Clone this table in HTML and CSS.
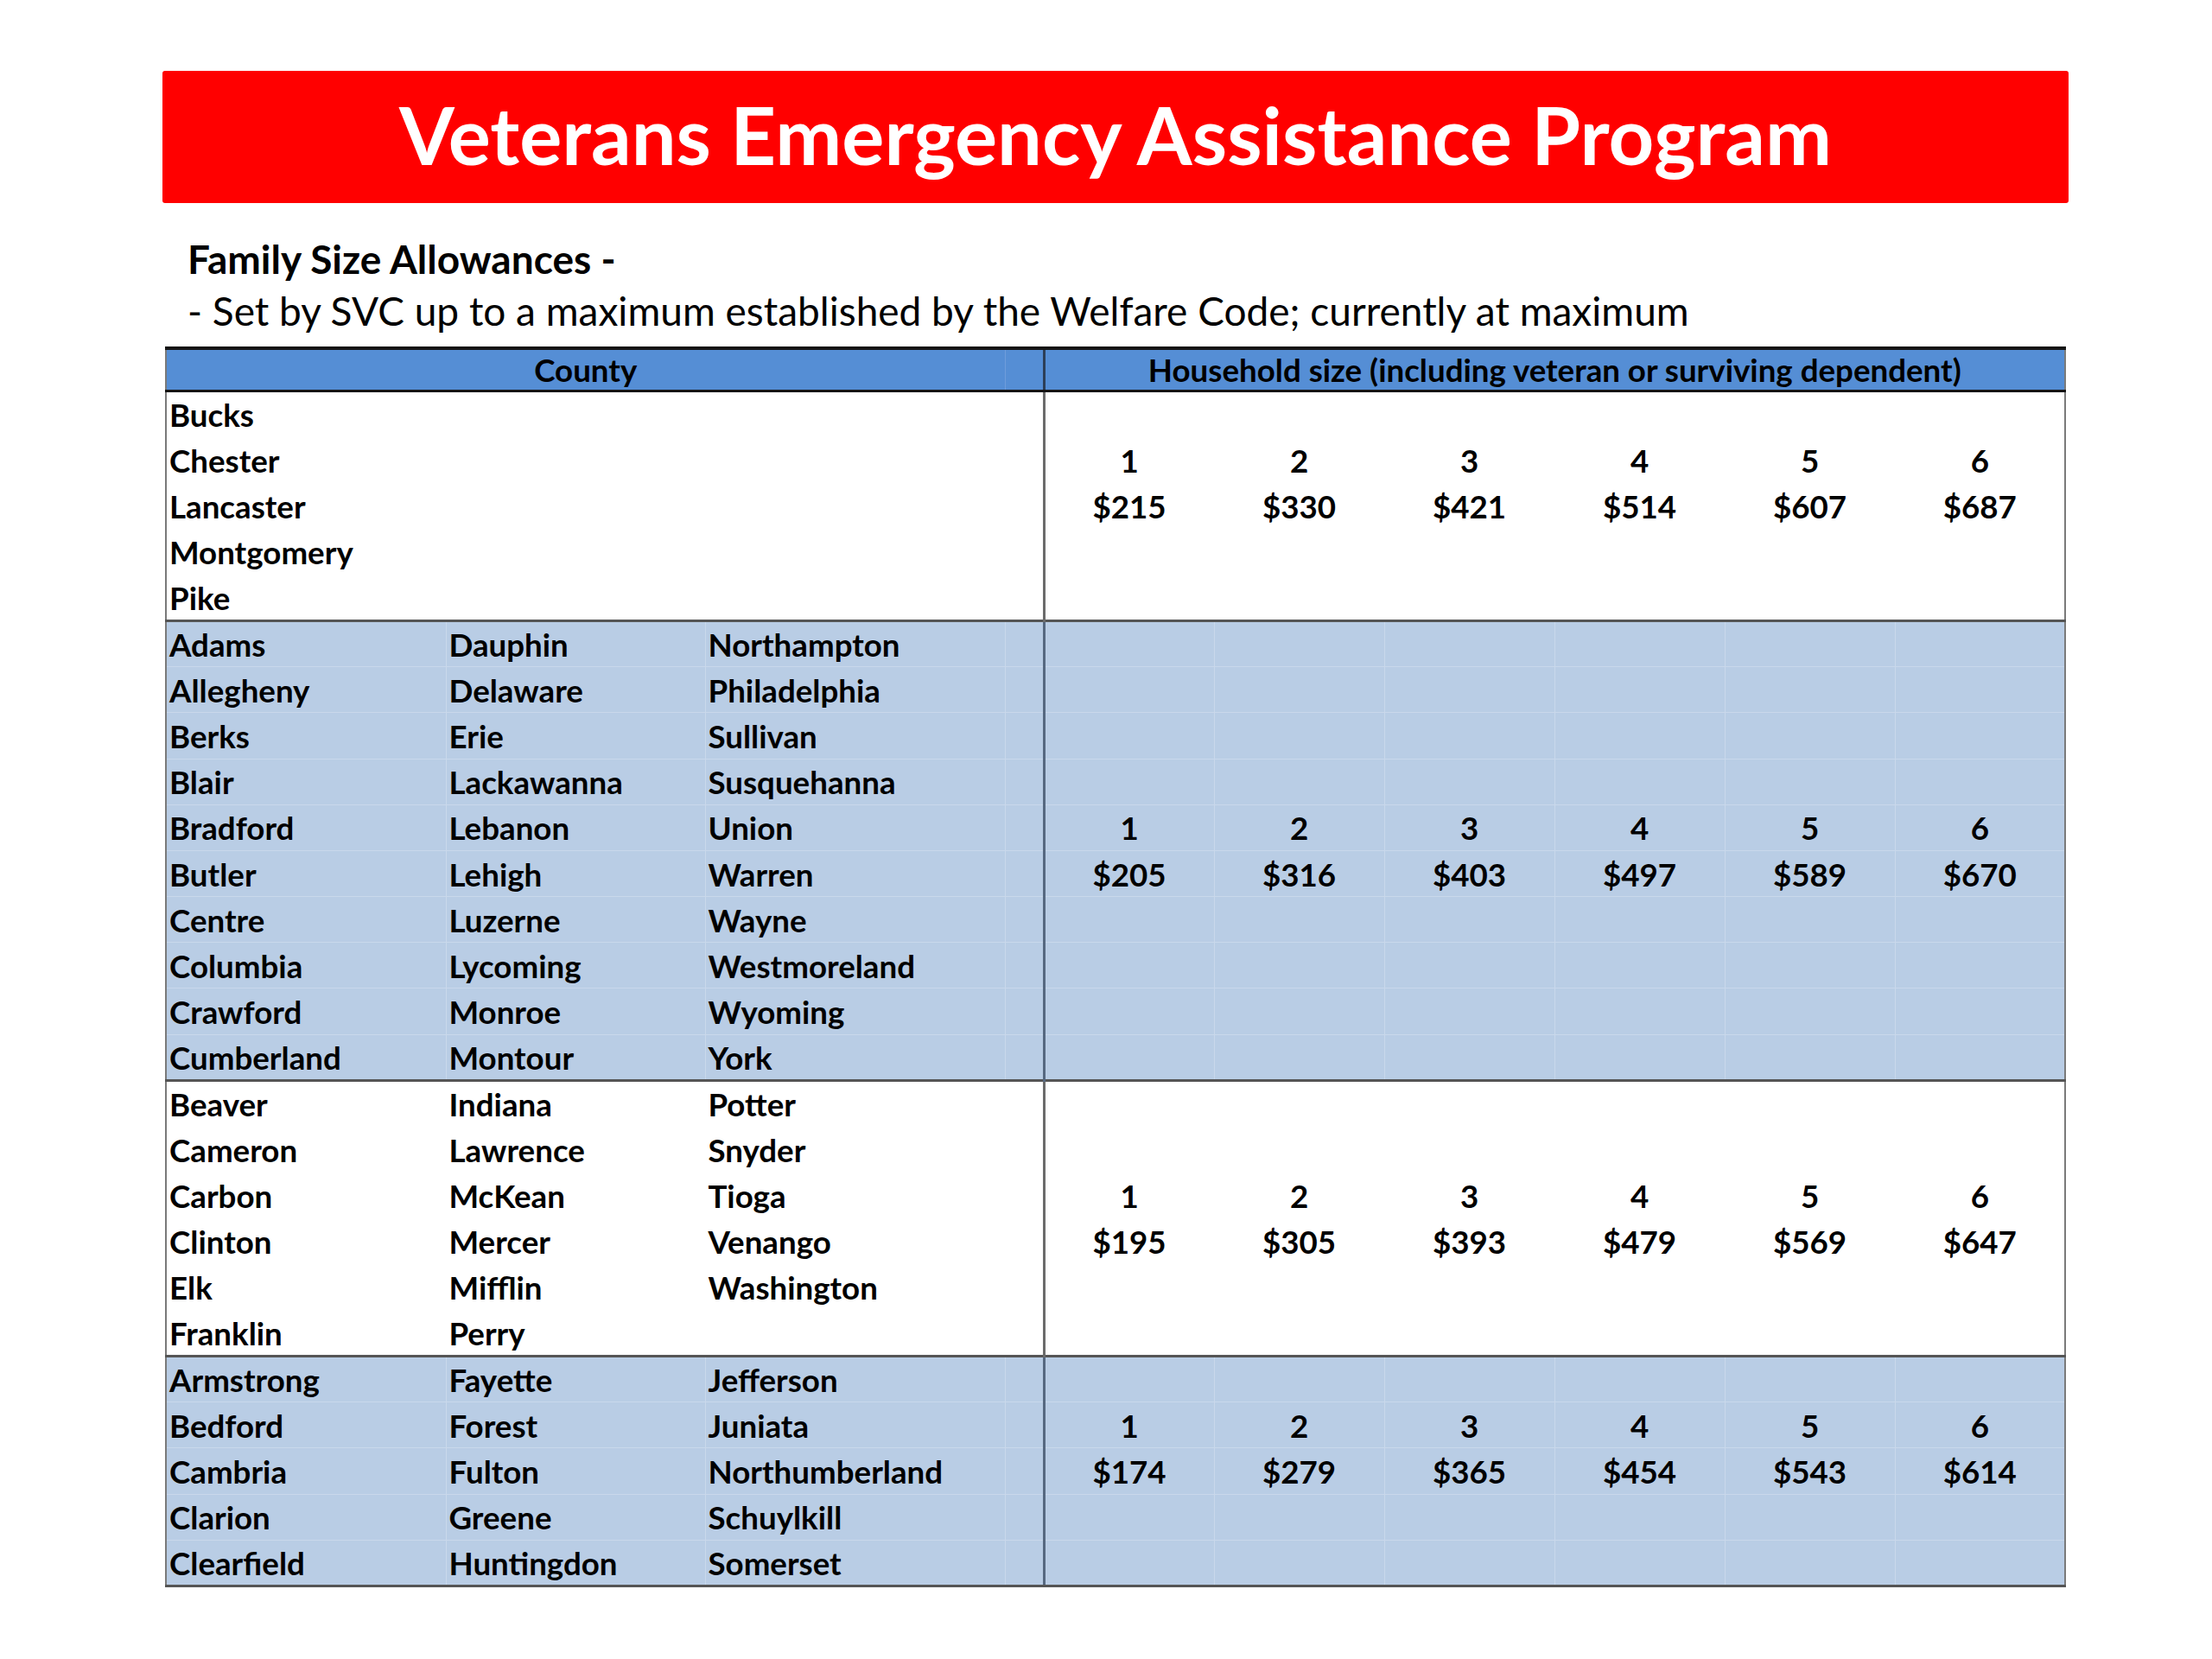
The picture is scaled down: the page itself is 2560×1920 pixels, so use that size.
FILE: index.html
```html
<!DOCTYPE html>
<html lang="en">
<head>
<meta charset="utf-8">
<title>Veterans Emergency Assistance Program</title>
<link rel="stylesheet" href="styles.css">
</head>
<body>
<main class="page">
  <header class="banner">
    <h1 class="banner-title">Veterans Emergency Assistance Program</h1>
  </header>
  <section class="intro">
    <p class="intro-head">Family Size Allowances -</p>
    <p class="intro-note">- Set by SVC up to a maximum established by the Welfare Code; currently at maximum</p>
  </section>
  <table class="grid">
    <colgroup>
      <col class="c-a"><col class="c-b"><col class="c-c"><col class="c-d">
      <col class="c-v"><col class="c-v"><col class="c-v"><col class="c-v"><col class="c-v"><col class="c-v">
    </colgroup>
    <thead>
      <tr class="head-row">
        <th colspan="3" class="h-county">County</th>
        <th class="h-gap"></th>
        <th colspan="6" class="h-size">Household size (including veteran or surviving dependent)</th>
      </tr>
    </thead>
    <tbody class="grp grp-white">
      <tr><td>Bucks</td><td></td><td></td><td class="gap"></td><td class="v v1"></td><td class="v"></td><td class="v"></td><td class="v"></td><td class="v"></td><td class="v"></td></tr>
      <tr><td>Chester</td><td></td><td></td><td class="gap"></td><td class="v v1">1</td><td class="v">2</td><td class="v">3</td><td class="v">4</td><td class="v">5</td><td class="v">6</td></tr>
      <tr><td>Lancaster</td><td></td><td></td><td class="gap"></td><td class="v v1">$215</td><td class="v">$330</td><td class="v">$421</td><td class="v">$514</td><td class="v">$607</td><td class="v">$687</td></tr>
      <tr><td>Montgomery</td><td></td><td></td><td class="gap"></td><td class="v v1"></td><td class="v"></td><td class="v"></td><td class="v"></td><td class="v"></td><td class="v"></td></tr>
      <tr><td>Pike</td><td></td><td></td><td class="gap"></td><td class="v v1"></td><td class="v"></td><td class="v"></td><td class="v"></td><td class="v"></td><td class="v"></td></tr>
    </tbody>
    <tbody class="grp grp-blue">
      <tr><td>Adams</td><td>Dauphin</td><td>Northampton</td><td class="gap"></td><td class="v v1"></td><td class="v"></td><td class="v"></td><td class="v"></td><td class="v"></td><td class="v"></td></tr>
      <tr><td>Allegheny</td><td>Delaware</td><td>Philadelphia</td><td class="gap"></td><td class="v v1"></td><td class="v"></td><td class="v"></td><td class="v"></td><td class="v"></td><td class="v"></td></tr>
      <tr><td>Berks</td><td>Erie</td><td>Sullivan</td><td class="gap"></td><td class="v v1"></td><td class="v"></td><td class="v"></td><td class="v"></td><td class="v"></td><td class="v"></td></tr>
      <tr><td>Blair</td><td>Lackawanna</td><td>Susquehanna</td><td class="gap"></td><td class="v v1"></td><td class="v"></td><td class="v"></td><td class="v"></td><td class="v"></td><td class="v"></td></tr>
      <tr><td>Bradford</td><td>Lebanon</td><td>Union</td><td class="gap"></td><td class="v v1">1</td><td class="v">2</td><td class="v">3</td><td class="v">4</td><td class="v">5</td><td class="v">6</td></tr>
      <tr><td>Butler</td><td>Lehigh</td><td>Warren</td><td class="gap"></td><td class="v v1">$205</td><td class="v">$316</td><td class="v">$403</td><td class="v">$497</td><td class="v">$589</td><td class="v">$670</td></tr>
      <tr><td>Centre</td><td>Luzerne</td><td>Wayne</td><td class="gap"></td><td class="v v1"></td><td class="v"></td><td class="v"></td><td class="v"></td><td class="v"></td><td class="v"></td></tr>
      <tr><td>Columbia</td><td>Lycoming</td><td>Westmoreland</td><td class="gap"></td><td class="v v1"></td><td class="v"></td><td class="v"></td><td class="v"></td><td class="v"></td><td class="v"></td></tr>
      <tr><td>Crawford</td><td>Monroe</td><td>Wyoming</td><td class="gap"></td><td class="v v1"></td><td class="v"></td><td class="v"></td><td class="v"></td><td class="v"></td><td class="v"></td></tr>
      <tr><td>Cumberland</td><td>Montour</td><td>York</td><td class="gap"></td><td class="v v1"></td><td class="v"></td><td class="v"></td><td class="v"></td><td class="v"></td><td class="v"></td></tr>
    </tbody>
    <tbody class="grp grp-white">
      <tr><td>Beaver</td><td>Indiana</td><td>Potter</td><td class="gap"></td><td class="v v1"></td><td class="v"></td><td class="v"></td><td class="v"></td><td class="v"></td><td class="v"></td></tr>
      <tr><td>Cameron</td><td>Lawrence</td><td>Snyder</td><td class="gap"></td><td class="v v1"></td><td class="v"></td><td class="v"></td><td class="v"></td><td class="v"></td><td class="v"></td></tr>
      <tr><td>Carbon</td><td>McKean</td><td>Tioga</td><td class="gap"></td><td class="v v1">1</td><td class="v">2</td><td class="v">3</td><td class="v">4</td><td class="v">5</td><td class="v">6</td></tr>
      <tr><td>Clinton</td><td>Mercer</td><td>Venango</td><td class="gap"></td><td class="v v1">$195</td><td class="v">$305</td><td class="v">$393</td><td class="v">$479</td><td class="v">$569</td><td class="v">$647</td></tr>
      <tr><td>Elk</td><td>Mifflin</td><td>Washington</td><td class="gap"></td><td class="v v1"></td><td class="v"></td><td class="v"></td><td class="v"></td><td class="v"></td><td class="v"></td></tr>
      <tr><td>Franklin</td><td>Perry</td><td></td><td class="gap"></td><td class="v v1"></td><td class="v"></td><td class="v"></td><td class="v"></td><td class="v"></td><td class="v"></td></tr>
    </tbody>
    <tbody class="grp grp-blue">
      <tr><td>Armstrong</td><td>Fayette</td><td>Jefferson</td><td class="gap"></td><td class="v v1"></td><td class="v"></td><td class="v"></td><td class="v"></td><td class="v"></td><td class="v"></td></tr>
      <tr><td>Bedford</td><td>Forest</td><td>Juniata</td><td class="gap"></td><td class="v v1">1</td><td class="v">2</td><td class="v">3</td><td class="v">4</td><td class="v">5</td><td class="v">6</td></tr>
      <tr><td>Cambria</td><td>Fulton</td><td>Northumberland</td><td class="gap"></td><td class="v v1">$174</td><td class="v">$279</td><td class="v">$365</td><td class="v">$454</td><td class="v">$543</td><td class="v">$614</td></tr>
      <tr><td>Clarion</td><td>Greene</td><td>Schuylkill</td><td class="gap"></td><td class="v v1"></td><td class="v"></td><td class="v"></td><td class="v"></td><td class="v"></td><td class="v"></td></tr>
      <tr><td>Clearfield</td><td>Huntingdon</td><td>Somerset</td><td class="gap"></td><td class="v v1"></td><td class="v"></td><td class="v"></td><td class="v"></td><td class="v"></td><td class="v"></td></tr>
    </tbody>
  </table>
</main>
</body>
</html>
```

FILE: styles.css
```css
html, body {
  margin: 0;
  padding: 0;
  background: #ffffff;
}

body {
  font-family: Lato, "Open Sans", "Liberation Sans", sans-serif;
  color: #000000;
}

.page {
  width: 2206px;
  padding: 82px 0 0 188px;
}

.banner {
  height: 153px;
  background: #ff0000;
  border-radius: 3px;
  display: flex;
  align-items: center;
  justify-content: center;
}

.banner-title {
  margin: 0;
  color: #ffffff;
  font-size: 92px;
  font-weight: 700;
  line-height: 1;
  padding-bottom: 6px;
}

.intro {
  padding: 35px 0 11px 29px;
}

.intro p {
  margin: 0;
  font-size: 46px;
  line-height: 60px;
}

.intro-head {
  font-weight: 700;
}

.intro-note {
  font-weight: 400;
}

.grid {
  margin-left: 3px;
  border-collapse: collapse;
  table-layout: fixed;
  width: 2198px;
  font-size: 36.7px;
  font-weight: 700;
  border-left: 2px solid #7a7a7a;
  border-right: 2px solid #7a7a7a;
}

.c-a { width: 324px; }
.c-b { width: 300px; }
.c-c { width: 347px; }
.c-d { width: 45px; }
.c-v { width: 197px; }

.head-row th {
  height: 46px;
  padding: 0;
  background: #558ed5;
  border-top: 4px solid #151515;
  border-bottom: 3px solid #151515;
  font-weight: 700;
  line-height: 1;
  text-align: center;
  vertical-align: middle;
}

.head-row .h-gap {
  border-left: 1px solid #6f9cdb;
}

.head-row .h-size {
  border-left: 3px solid #2c3e57;
}

.grid td {
  height: 53.2px;
  padding: 2px 3px 0;
  box-sizing: border-box;
  line-height: 1;
  white-space: nowrap;
  vertical-align: middle;
}

.grid td.v {
  text-align: center;
  padding-left: 0;
  padding-right: 0;
}

.grp-white td {
  background: #ffffff;
  border: 1px solid #ffffff;
}

.grp-blue td {
  background: #b9cde5;
  border: 1px solid #c9d8eb;
}

.grid td.v1 {
  border-left: 3px solid #6b6b6b;
}

.grp-blue td.v1 {
  border-left-color: #566880;
}

.grp > tr:first-child td {
  border-top: 3px solid #555555;
}

.grp:last-child > tr:last-child td {
  border-bottom: 3px solid #555555;
}
```
